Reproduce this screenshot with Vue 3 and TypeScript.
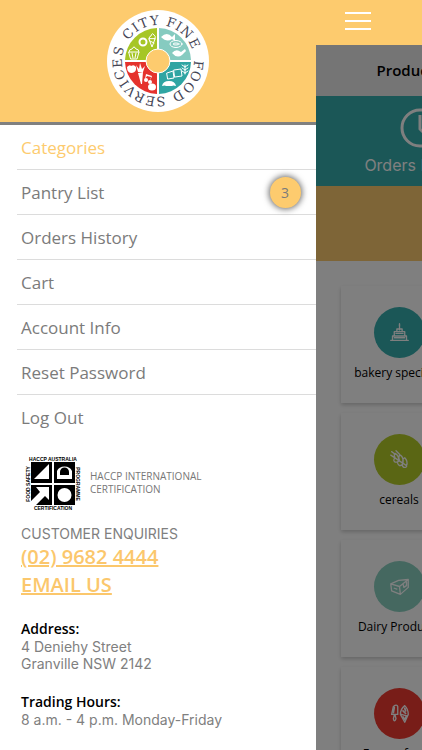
<script setup lang="ts">
interface MenuItem {
  label: string
  active?: boolean
  badge?: number
}

interface Category {
  name: string
  icon: 'cake' | 'wheat' | 'cheese' | 'ice'
}

const menu: MenuItem[] = [
  { label: 'Categories', active: true },
  { label: 'Pantry List', badge: 3 },
  { label: 'Orders History' },
  { label: 'Cart' },
  { label: 'Account Info' },
  { label: 'Reset Password' },
  { label: 'Log Out' },
]

const categories: Category[] = [
  { name: 'bakery specialty', icon: 'cake' },
  { name: 'cereals', icon: 'wheat' },
  { name: 'Dairy Products', icon: 'cheese' },
  { name: 'Frozen foods', icon: 'ice' },
]

// Letters of the round logo, each with its angle clockwise from the top.
const ring: [string, number][] = [
  ['C', -48], ['I', -34], ['T', -21], ['Y', -5],
  ['F', 19], ['I', 31], ['N', 45], ['E', 64],
  ['F', 96], ['O', 112], ['O', 131], ['D', 150],
  ['S', 176], ['E', 191], ['R', 207], ['V', 223],
  ['I', 236], ['C', 250], ['E', 267], ['S', 284],
]
</script>

<template>
  <div class="app">
    <aside class="drawer">
      <header class="brand">
        <svg class="logo" viewBox="-51 -51 102 102" role="img" aria-label="City Fine Food Services">
          <circle r="51" fill="#fff" />
          <path d="M-1 -1V-33A33 33 0 0 0 -33 -1Z" fill="#a6c626" />
          <path d="M1 -1V-33A33 33 0 0 1 33 -1Z" fill="#86cbc0" />
          <path d="M-1 1V33A33 33 0 0 1 -33 1Z" fill="#e5322d" />
          <path d="M1 1V33A33 33 0 0 0 33 1Z" fill="#2fa5a3" />
          <g fill="none" stroke="#fff" stroke-width="1" stroke-linejoin="round" stroke-linecap="round">
            <path d="M-29 -9h10l-2 7h-6zM-26 -8l1 5M-22 -8l-1 5M-29 -9q0 -3 3 -3q2 -4 4 0q3 0 3 3" />
            <circle cx="-15" cy="-19" r="3.5" stroke-width="2" />
            <path d="M-9 -22l3 8l3 -8zM-9 -22q0 -3 2 -3q1 -4 3 -1q2 1 1 4M-8 -20l4 2" />
            <ellipse cx="18" cy="-17" rx="6" ry="3.5" />
            <ellipse cx="18" cy="-17" rx="3" ry="1" />
            <path d="M9 12l6 -2l1 7l-6 1zM16 9l7 -1l1 7l-7 1z" />
            <path d="M27 13V4M27 6l-3 -2M27 6l3 -2M27 9l-3 -2M27 9l3 -2M27 12l-3 -2M27 12l3 -2" />
          </g>
          <g fill="#fff">
            <path d="M3 -24q6 -6 11 0l3 -3v7l-3 -2q-5 4 -11 -2z" />
            <path d="M14 -8q4 -5 9 -1l4 -3l1 2l-4 4q-5 4 -10 -2z" />
            <path d="M4 25q1 -5 7 -5q6 0 7 5q-3 -1 -4 0h-6q-1 -1 -4 0z" />
            <path d="M-31 6q3 -3 4 -1q3 -2 5 1q1 5 -4 6q-5 0 -5 -6z" />
            <path d="M-20 12l5 -1l-1 12h-1zM-20 11l-2 -7l3 4l1 -6l2 6l3 -3l-2 6z" />
            <circle cx="-12" cy="19" r="2" />
            <circle cx="-8" cy="21" r="2" />
            <path d="M-13 18l1 -5l6 2l-2 5l1 -4l-4 -1z" />
            <ellipse cx="-6" cy="26" rx="4" ry="3.5" />
          </g>
          <circle r="12" fill="#fdcb6e" stroke="#fff" stroke-width="1" />
          <text
            v-for="([letter, angle], i) in ring"
            :key="i"
            class="ring-letter"
            :transform="`rotate(${angle}) translate(0 -36)`"
          >{{ letter }}</text>
        </svg>
      </header>

      <nav class="menu">
        <a v-for="item in menu" :key="item.label" href="#" class="item" :class="{ active: item.active }">
          <span>{{ item.label }}</span>
          <span v-if="item.badge" class="badge">{{ item.badge }}</span>
        </a>
      </nav>

      <section class="haccp">
        <svg class="seal" viewBox="0 0 54 54" aria-hidden="true">
          <g fill="#000">
            <path d="M5 6h21v21H5zM28 6h21v21H28zM5 29h21v20H5zM28 29h21v20H28z" />
          </g>
          <g fill="#fff">
            <path d="M8 23L23 8v15z" />
            <path d="M31 23V15a8 7 0 0 1 15 0v8z" />
            <circle cx="38.500" cy="39" r="7" />
            <path d="M10 31h13v13l-4 -4l-9 9H5v-4l9 -9z" />
          </g>
          <path d="M34 19v-3a4 4 0 0 1 9 0v3z" fill="#000" />
          <g class="seal-text">
            <text x="27" y="5">HACCP AUSTRALIA</text>
            <text x="27" y="54">CERTIFICATION</text>
            <text transform="translate(4 28) rotate(-90)">FOOD SAFETY</text>
            <text transform="translate(50 28) rotate(90)">PROGRAMME</text>
          </g>
        </svg>
        <p class="haccp-label">HACCP INTERNATIONAL<br>CERTIFICATION</p>
      </section>

      <section class="contact">
        <p>CUSTOMER ENQUIRIES</p>
        <a href="tel:0296824444">(02) 9682 4444</a>
        <a href="#email">EMAIL US</a>
      </section>
      <section class="details">
        <h2>Address:</h2>
        <p>4 Deniehy Street</p>
        <p>Granville NSW 2142</p>
      </section>
      <section class="details">
        <h2>Trading Hours:</h2>
        <p>8 a.m. - 4 p.m. Monday-Friday</p>
      </section>
    </aside>

    <main class="page">
      <header class="topbar">
        <button type="button" class="burger" aria-label="Menu">
          <span /><span /><span />
        </button>
      </header>
      <div class="behind">
        <h1 class="title">Product Categories</h1>
        <div class="shortcuts">
          <a href="#orders" class="shortcut">
            <svg width="42" height="42" viewBox="0 0 42 42" fill="none" stroke="#fff" stroke-width="3" aria-hidden="true">
              <circle cx="21" cy="21" r="18" />
              <path d="M21 8v14l7 7" />
            </svg>
            <span>Orders History</span>
          </a>
        </div>
        <div class="banner" />
        <div class="cards">
          <a v-for="c in categories" :key="c.name" href="#" class="card">
            <span class="disc" :class="c.icon">
              <svg viewBox="0 0 24 24" fill="none" stroke="currentColor" stroke-width="1.500" stroke-linejoin="round" stroke-linecap="round" aria-hidden="true">
                <template v-if="c.icon === 'cake'">
                  <path d="M12 3v6M2 21h20M4 20v-4h16v4M6 15v-4h12v4M9 11V8h6v3" />
                  <path d="M6 18h12M8 13h8M12 2v2" stroke-width="1.500" />
                </template>
                <template v-else-if="c.icon === 'wheat'">
                  <path d="M2 7l18 12M7 10q-2 -4 0 -5q4 2 4 7M12 13q-2 -5 1 -6q4 3 3 9M16 16q-1 -5 2 -6q4 4 2 9M7 10q-3 3 0 5q4 0 5 -2M11 13q-3 3 1 6q3 0 4 -3M16 16q-2 3 1 5q4 0 3 -2M3 3l4 3M8 2l4 4" />
                </template>
                <template v-else-if="c.icon === 'cheese'">
                  <path d="M2 9L11 5L22 4V13L13 21L3 17zM2 9l10 3l10 -8M12 12l1 9M16 9l1 4l3 -2V7M6 14l3 1" />
                </template>
                <template v-else>
                  <path d="M3 13L5 4q4 -3 5 0v9zM6 14l-1 4q1 5 3 0l-1 -4M18 3q-5 4 -5 10l5 9l4 -9q0 -6 -4 -10zM14 13l7 2" />
                  <path d="M5 11l1 -6M18 6l1 3M16 9l3 3M16 16l2 3l2 -4" stroke-width="2" />
                </template>
              </svg>
            </span>
            <span class="card-name">{{ c.name }}</span>
          </a>
        </div>
      </div>
    </main>
  </div>
</template>

<style>
body {
  background: #fff;
}
</style>

<style scoped>
.app {
  display: flex;
  height: 100vh;
  overflow: hidden;
  background: #fff;
  font-family: "Open Sans", "Noto Sans", sans-serif;
}
a {
  color: inherit;
  text-decoration: none;
}
p, h1, h2 {
  margin: 0;
}
.drawer {
  width: calc(75% - 1px);
  flex: none;
}
.brand {
  display: flex;
  justify-content: center;
  padding: 10px 0;
  background: #fdcb6e;
  border-bottom: 3px solid #808080;
}
.logo {
  width: 102px;
  height: 102px;
}
.ring-letter {
  font: 13px "DejaVu Serif", serif;
  fill: #454555;
  text-anchor: middle;
}
.menu {
  padding-left: 17px;
}
.item {
  display: flex;
  align-items: center;
  justify-content: space-between;
  box-sizing: border-box;
  height: 45px;
  padding: 0 15px 0 4px;
  border-bottom: 1px solid #dcdcdc;
  color: #7b7b7b;
  font-size: 17px;
}
.item:last-child {
  border-bottom: 0;
}
.item.active {
  color: #fdcb6e;
}
.badge {
  display: grid;
  place-items: center;
  width: 31px;
  height: 31px;
  border-radius: 50%;
  background: #fdcb6e;
  box-shadow: 0 0 6px 1px rgba(0, 0, 0, 0.6);
  font-size: 14px;
}
.haccp {
  display: flex;
  align-items: center;
  gap: 10px;
  padding: 16px 0 0 26px;
}
.seal {
  width: 54px;
  height: 54px;
  overflow: visible;
}
.seal-text {
  font: bold 5px "Liberation Sans", sans-serif;
  text-anchor: middle;
}
.haccp-label {
  color: #777;
  font-size: 10px;
  font-weight: 400;
  line-height: 13px;
}
.contact {
  display: flex;
  flex-direction: column;
  align-items: flex-start;
  padding: 15px 0 0 21px;
}
.contact p,
.details p {
  color: #808080;
  font-family: Inter, "Liberation Sans", sans-serif;
  font-size: 14px;
  line-height: 17px;
}
.contact p {
  line-height: 18px;
}
.contact a {
  color: #fbc76c;
  font-size: 20px;
  font-weight: 600;
  line-height: 28px;
  text-decoration: underline;
}
.details {
  padding: 21px 0 0 21px;
}
.details h2 {
  color: #000;
  font-size: 14px;
  font-weight: 600;
  line-height: 18px;
}
.page {
  flex: 1;
  min-width: 0;
  overflow: hidden;
}
.topbar {
  box-sizing: border-box;
  height: 45px;
  padding: 12px 29px;
  background: #fdcb6e;
}
.burger {
  display: flex;
  flex-direction: column;
  gap: 6px;
  padding: 0;
  border: 0;
  background: none;
}
.burger span {
  width: 26px;
  height: 2px;
  background: #fff;
}
.behind {
  position: relative;
  width: 100vw;
  height: 100%;
  background: #fff;
}
.behind::after {
  content: "";
  position: absolute;
  inset: 0;
  background: rgba(0, 0, 0, 0.5);
}
.title {
  padding-left: 61px;
  background: #ebebeb;
  color: #000;
  font-size: 15px;
  font-weight: 600;
  line-height: 51px;
}
.shortcuts {
  display: grid;
  grid-template-columns: 1fr 1fr;
  height: 90px;
  background: #36aeae;
}
.shortcut {
  display: flex;
  flex-direction: column;
  align-items: center;
  gap: 6px;
  padding: 11px 3px 0 0;
  color: #fff;
  font-family: Inter, "Liberation Sans", sans-serif;
  font-size: 16px;
  line-height: 20px;
}
.banner {
  height: 75px;
  background: #fdcb6e;
}
.cards {
  display: grid;
  gap: 10px;
  padding: 25px;
}
.card {
  display: flex;
  flex-direction: column;
  align-items: center;
  gap: 5px;
  box-sizing: border-box;
  width: 117px;
  height: 117px;
  padding-top: 21px;
  background: #fff;
  box-shadow: 0 2px 4px rgba(0, 0, 0, 0.2);
}
.card-name {
  color: #000;
  font-size: 12px;
  line-height: 20px;
  white-space: nowrap;
}
.disc {
  display: grid;
  place-items: center;
  width: 51px;
  height: 51px;
  border-radius: 50%;
  color: #fff;
}
.disc svg {
  width: 21px;
  height: 21px;
}
.cake {
  background: #36aeae;
}
.wheat {
  background: #b4cc28;
}
.cheese {
  background: #8ad0c0;
}
.ice {
  background: #f03a30;
}
</style>
